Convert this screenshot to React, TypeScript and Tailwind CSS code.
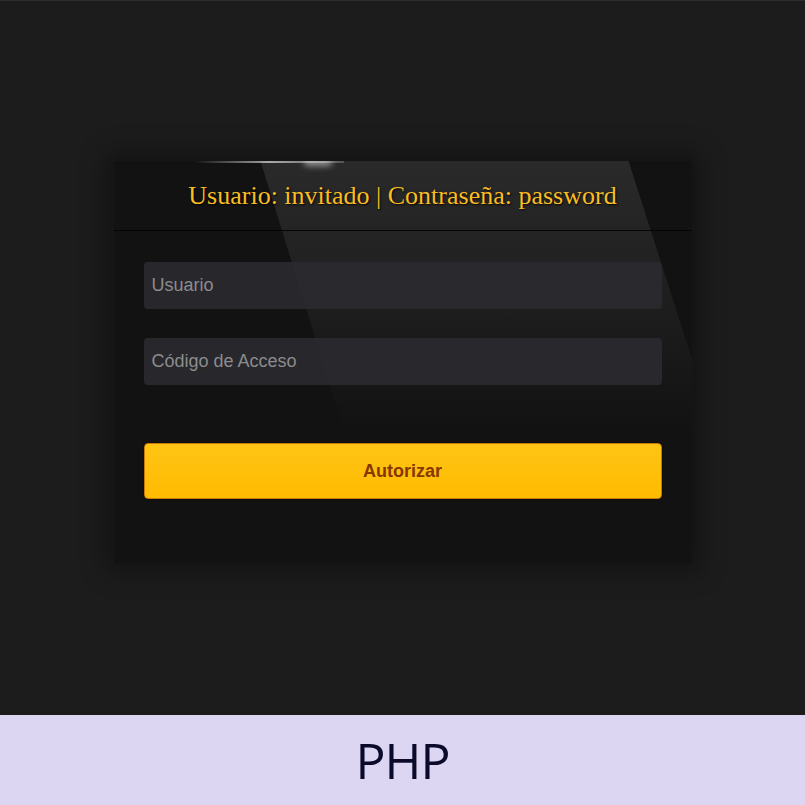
export default function App() {
  return (
    <div className="w-[805px] h-[805px] flex flex-col bg-[#1c1c1c]">
      <div className="flex-1 flex items-start justify-center pt-[160px] border-t border-[#2c2c2c]">
        <div className="relative w-[578px] h-[402px] bg-[#121212] shadow-[0_0_24px_8px_rgba(0,0,0,0.35)] overflow-hidden">
          {/* glare */}
          <div className="absolute inset-0 pointer-events-none bg-[linear-gradient(to_bottom,rgba(255,255,255,0.1)_0px,rgba(255,255,255,0.06)_120px,rgba(255,255,255,0.025)_210px,rgba(255,255,255,0)_270px)] [clip-path:polygon(147px_0,515px_0,643px_400px,271px_400px)]" />
          {/* top light streak */}
          <div className="absolute top-0 left-[80px] w-[150px] h-[2px] bg-gradient-to-r from-transparent via-white/60 to-white/20" />
          <div className="absolute top-[-3px] left-[190px] w-[28px] h-[8px] rounded-full bg-white/50 blur-[3px]" />

          <div className="relative h-[70px] flex items-center justify-center border-b border-[#050505]">
            <span
              className="text-[26px] text-[#fbbd21] [text-shadow:1px_1px_2px_rgba(0,0,0,0.9)]"
              style={{ fontFamily: '"Liberation Serif", "Times New Roman", serif' }}
            >
              Usuario: invitado | Contraseña: password
            </span>
          </div>

          <div className="relative px-[30px] pt-[31px] flex flex-col" style={{ fontFamily: '"Liberation Sans", Arial, sans-serif' }}>
            <input
              placeholder="Usuario"
              className="h-[47px] rounded-[4px] bg-[#2a2a30]/90 px-2 text-[18px] text-[#ddd] placeholder:text-[#8c8c8c] outline-none"
            />
            <input
              placeholder="Código de Acceso"
              className="mt-[29px] h-[47px] rounded-[4px] bg-[#2a2a30]/90 px-2 text-[18px] text-[#ddd] placeholder:text-[#8c8c8c] outline-none"
            />
            <button
              type="button"
              className="mt-[58px] h-[56px] rounded-[4px] bg-gradient-to-b from-[#ffc414] to-[#ffbb00] border border-[#c97a00] text-[18px] font-bold text-[#853800] shadow-[0_0_2px_rgba(0,0,0,0.8)]"
            >
              Autorizar
            </button>
          </div>
        </div>
      </div>
      <div className="h-[90px] bg-[#dcd6f2] flex items-center justify-center">
        <span
          className="text-[50px] leading-none text-[#0b0a2b] tracking-[-1px]"
          style={{ fontFamily: '"Open Sans", "Noto Sans", sans-serif' }}
        >
          PHP
        </span>
      </div>
    </div>
  );
}
